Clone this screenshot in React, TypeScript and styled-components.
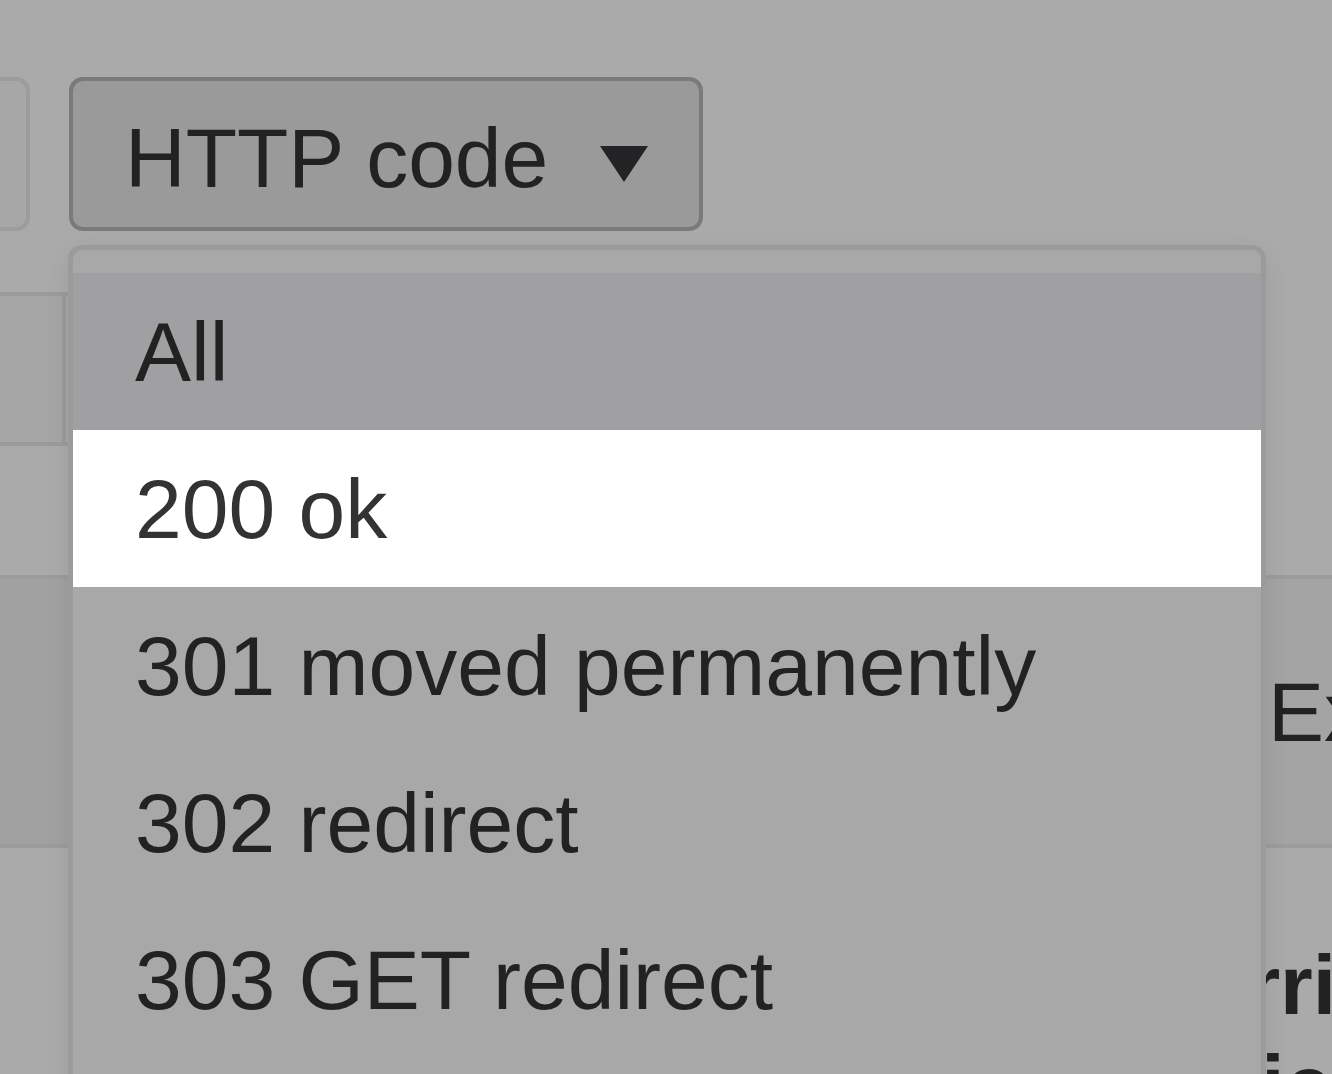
import styled, { createGlobalStyle } from 'styled-components';

const GlobalStyle = createGlobalStyle`
  html, body {
    margin: 0;
    padding: 0;
    background: #aaaaaa;
    overflow: hidden;
  }

  body {
    font-family: 'Liberation Sans', Arial, sans-serif;
    color: #222222;
  }
`;

const Page = styled.div`
  width: 1332px;
  height: 1074px;
  overflow: hidden;
`;

const Toolbar = styled.div`
  display: flex;
  align-items: flex-start;
  gap: 39px;
  padding-top: 77px;
  margin-bottom: 61px;
`;

const GhostButton = styled.div`
  width: 400px;
  height: 154px;
  margin-left: -370px;
  box-sizing: border-box;
  border: 4px solid #9c9c9c;
  border-radius: 14px;
  background: #a7a7a7;
`;

const FilterWrap = styled.div`
  position: relative;
`;

const FilterButton = styled.button`
  width: 634px;
  height: 154px;
  box-sizing: border-box;
  display: flex;
  align-items: center;
  gap: 52px;
  padding: 8px 49px 0 52px;
  border: 4px solid #7a7a7a;
  border-radius: 14px;
  background: #9a9a9a;
  font-family: inherit;
  font-size: 84px;
  line-height: 1;
  color: #222222;
  cursor: pointer;
`;

const Caret = styled.svg`
  width: 48px;
  height: 36px;
  margin-top: 12px;
  flex-shrink: 0;
`;

const Menu = styled.ul`
  position: absolute;
  top: 168px;
  left: -1px;
  width: 1198px;
  height: 900px;
  box-sizing: border-box;
  margin: 0;
  padding: 23px 0 0;
  list-style: none;
  border: 5px solid #9b9b9b;
  border-bottom: none;
  border-radius: 14px 14px 0 0;
  background: #a8a8a8;
  box-shadow: 0 8px 24px rgba(0, 0, 0, 0.08);
  z-index: 10;
`;

const MenuItem = styled.li<{ $tone?: 'hover' | 'active' }>`
  height: 157px;
  display: flex;
  align-items: center;
  padding-left: 62px;
  font-size: 84px;
  line-height: 1;
  white-space: nowrap;
  color: ${p => (p.$tone === 'active' ? '#333333' : '#222222')};
  background: ${p =>
    p.$tone === 'active' ? '#ffffff' : p.$tone === 'hover' ? '#a0a0a2' : 'transparent'};
`;

const FilterRow = styled.div`
  width: 1000px;
  height: 154px;
  box-sizing: border-box;
  display: flex;
  border-top: 4px solid #9b9b9b;
  border-bottom: 4px solid #9b9b9b;
  background: #a8a8a8;
`;

const FilterCell = styled.div`
  width: 66px;
  box-sizing: border-box;
  border-right: 4px solid #9b9b9b;
  background: #a6a6a6;
`;

const Spacer = styled.div`
  height: 129px;
`;

const HeaderRow = styled.div`
  height: 273px;
  box-sizing: border-box;
  display: flex;
  align-items: center;
  padding-left: 1268px;
  border-top: 4px solid #9c9c9c;
  border-bottom: 4px solid #9c9c9c;
  background: linear-gradient(90deg, #a1a1a1, #a2a2a2 80%, #a4a4a4);
  font-size: 84px;
  line-height: 1;
  white-space: nowrap;
`;

const BodyRow = styled.div`
  padding: 87px 0 0 1140px;
  font-size: 84px;
  font-weight: 700;
  line-height: 100px;
  white-space: nowrap;
`;

const codes = [
  { label: 'All', tone: 'hover' as const },
  { label: '200 ok', tone: 'active' as const },
  { label: '301 moved permanently' },
  { label: '302 redirect' },
  { label: '303 GET redirect' },
  { label: '304 not modified' },
];

export default function App() {
  return (
    <>
      <GlobalStyle />
      <Page>
        <Toolbar>
          <GhostButton />
          <FilterWrap>
            <FilterButton type='button'>
              HTTP code
              <Caret viewBox='0 0 48 36'>
                <path d='M0 0 H48 L24 36 Z' fill='#232325' />
              </Caret>
            </FilterButton>
            <Menu>
              {codes.map(code => (
                <MenuItem key={code.label} $tone={code.tone}>
                  {code.label}
                </MenuItem>
              ))}
            </Menu>
          </FilterWrap>
        </Toolbar>
        <FilterRow>
          <FilterCell />
        </FilterRow>
        <Spacer />
        <HeaderRow>Expires</HeaderRow>
        <BodyRow>
          Carrier
          <br />
          Official
        </BodyRow>
      </Page>
    </>
  );
}
